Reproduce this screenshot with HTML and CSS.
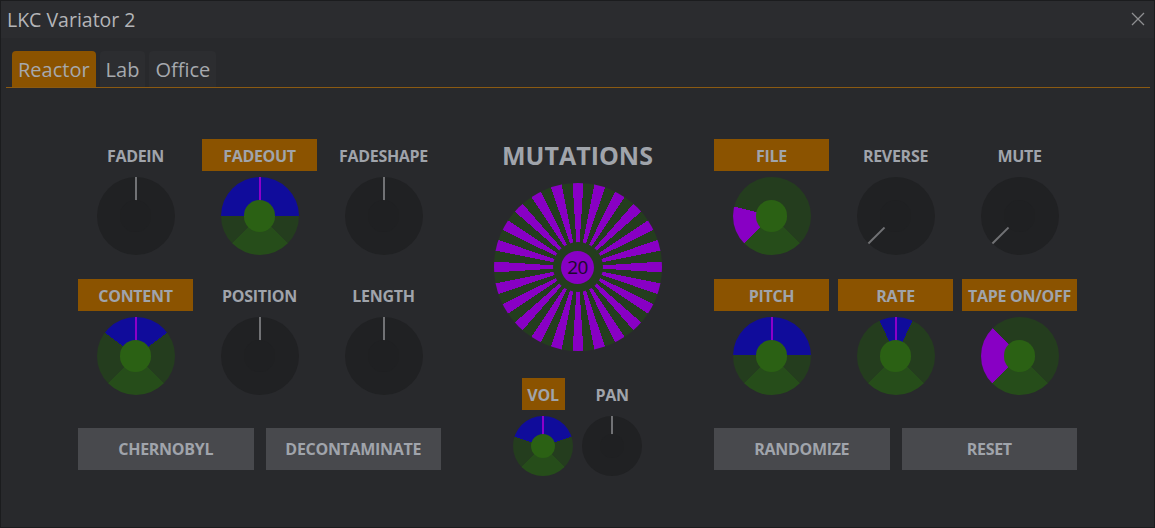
FILE: index.html
```html
<!DOCTYPE html>
<html>
<head>
<meta charset="utf-8">
<link rel="stylesheet" href="styles.css">
</head>
<body>
<div class="window">
  <div class="titlebar">
    <span class="title">LKC Variator 2</span>
    <svg class="close" width="14" height="14" viewBox="0 0 14 14"><path d="M1 1L13 13M13 1L1 13" stroke="#8e8f91" stroke-width="1.3" fill="none"/></svg>
  </div>
  <div class="tabbar">
    <div class="tab active">Reactor</div>
    <div class="tab">Lab</div>
    <div class="tab">Office</div>
  </div>
  <div class="main">
    <div class="group">
      <div class="cells">
        <div class="cell"><div class="label">FADEIN</div><div class="knob knob-lg knob-dark"><span class="ptr"></span></div></div>
        <div class="cell"><div class="label on">FADEOUT</div><div class="knob knob-lg knob-color" style="--start:270deg;--span:180deg;--fill:#100c9b"><span class="ptr"></span></div></div>
        <div class="cell"><div class="label">FADESHAPE</div><div class="knob knob-lg knob-dark"><span class="ptr"></span></div></div>
        <div class="cell"><div class="label on">CONTENT</div><div class="knob knob-lg knob-color" style="--start:307deg;--span:106deg;--fill:#100c9b"><span class="ptr"></span></div></div>
        <div class="cell"><div class="label">POSITION</div><div class="knob knob-lg knob-dark"><span class="ptr"></span></div></div>
        <div class="cell"><div class="label">LENGTH</div><div class="knob knob-lg knob-dark"><span class="ptr"></span></div></div>
      </div>
      <div class="buttons">
        <div class="btn">CHERNOBYL</div>
        <div class="btn">DECONTAMINATE</div>
      </div>
    </div>
    <div class="center">
      <div class="big-title">MUTATIONS</div>
      <div class="mut"><div class="mut-hub"><div class="mut-core">20</div></div></div>
      <div class="mini">
        <div class="mini-cell"><div class="label on vol">VOL</div><div class="knob knob-sm knob-color" style="--start:288deg;--span:144deg;--fill:#100c9b"><span class="ptr"></span></div></div>
        <div class="mini-cell"><div class="label">PAN</div><div class="knob knob-sm knob-dark"><span class="ptr"></span></div></div>
      </div>
    </div>
    <div class="group">
      <div class="cells">
        <div class="cell"><div class="label on">FILE</div><div class="knob knob-lg knob-color" style="--start:225deg;--span:59deg;--fill:#8800c4"></div></div>
        <div class="cell"><div class="label">REVERSE</div><div class="knob knob-lg knob-dark"><span class="ptr" style="--rot:-135deg"></span></div></div>
        <div class="cell"><div class="label">MUTE</div><div class="knob knob-lg knob-dark"><span class="ptr" style="--rot:-135deg"></span></div></div>
        <div class="cell"><div class="label on">PITCH</div><div class="knob knob-lg knob-color" style="--start:272deg;--span:176deg;--fill:#100c9b"><span class="ptr"></span></div></div>
        <div class="cell"><div class="label on">RATE</div><div class="knob knob-lg knob-color" style="--start:335deg;--span:50deg;--fill:#100c9b"><span class="ptr"></span></div></div>
        <div class="cell"><div class="label on">TAPE ON/OFF</div><div class="knob knob-lg knob-color" style="--start:225deg;--span:91deg;--fill:#8800c4"></div></div>
      </div>
      <div class="buttons">
        <div class="btn">RANDOMIZE</div>
        <div class="btn">RESET</div>
      </div>
    </div>
  </div>
</div>
</body>
</html>
```
FILE: styles.css
```css
html, body {
  margin: 0;
  padding: 0;
  background: #28292c;
}
.window {
  width: 1155px;
  height: 528px;
  box-sizing: border-box;
  border: 1px solid #1b1c1e;
  background: #28292c;
  font-family: "Open Sans", "Noto Sans", sans-serif;
  color: #a0a4ab;
  overflow: hidden;
}
.titlebar {
  height: 37px;
  background: #2b2c2f;
  display: flex;
  align-items: center;
  justify-content: space-between;
  padding: 0 9px 0 6px;
}
.title {
  font-size: 19.5px;
  color: #b4b5b8;
}
.close {
  display: block;
  margin-top: -2px;
}
.tabbar {
  margin: 13px 4px 0 5px;
  padding-left: 6px;
  display: flex;
  gap: 4px;
  border-bottom: 1px solid #8b5a12;
}
.tab {
  height: 36px;
  line-height: 37px;
  padding: 0 6px;
  font-size: 20px;
  color: #a6a9ae;
  background: #2c2d30;
  border-radius: 4px 4px 0 0;
}
.tab.active {
  background: #8b5300;
}
.main {
  display: grid;
  grid-template-columns: 363px 273px 363px;
  padding: 51px 0 0 77px;
}
.cells {
  display: grid;
  grid-template-columns: repeat(3, 115px);
  column-gap: 9px;
  row-gap: 24px;
}
.cell, .mini-cell {
  display: flex;
  flex-direction: column;
  align-items: center;
}
.label {
  height: 32px;
  width: 100%;
  box-sizing: border-box;
  padding-top: 2px;
  display: flex;
  align-items: center;
  justify-content: center;
  font-weight: 700;
  font-size: 16px;
  white-space: nowrap;
  letter-spacing: -0.3px;
}
.label.on {
  background: #8b5300;
}
.label.vol {
  width: 43px;
}
.knob {
  position: relative;
  border-radius: 50%;
  flex: none;
}
.knob-lg {
  width: 78px;
  height: 78px;
  margin-top: 6px;
}
.knob-sm {
  width: 60px;
  height: 60px;
  margin-top: 6px;
}
.knob-dark {
  background: #202123;
}
.knob-dark::after {
  content: "";
  position: absolute;
  left: 30%;
  top: 30%;
  width: 40%;
  height: 40%;
  border-radius: 50%;
  background: #1f2022;
}
.knob-color {
  background:
    conic-gradient(from var(--start), var(--fill) 0deg var(--span), transparent var(--span)),
    conic-gradient(#243d1e 0deg 135deg, #264d1a 135deg 225deg, #243d1e 225deg 360deg);
}
.knob-color::after {
  content: "";
  position: absolute;
  left: 30%;
  top: 30%;
  width: 40%;
  height: 40%;
  border-radius: 50%;
  background: #2b6114;
}
.ptr {
  position: absolute;
  inset: 0;
  transform: rotate(var(--rot, 0deg));
}
.ptr::before {
  content: "";
  position: absolute;
  left: calc(50% - 1px);
  top: 0;
  width: 2px;
  height: 31%;
  background: #717275;
}
.knob-color .ptr::before {
  background: #8c00c8;
}
.buttons {
  display: grid;
  grid-template-columns: 1fr 1fr;
  column-gap: 12px;
  margin-top: 33px;
}
.btn {
  height: 42px;
  background: #48494d;
  display: flex;
  align-items: center;
  justify-content: center;
  font-weight: 700;
  font-size: 16px;
  letter-spacing: -0.3px;
}
.center {
  display: flex;
  flex-direction: column;
  align-items: center;
}
.big-title {
  height: 32px;
  line-height: 32px;
  font-size: 25px;
  font-weight: 700;
  color: #a0a4ab;
}
.mut {
  margin-top: 12px;
  width: 168px;
  height: 168px;
  border-radius: 50%;
  background: repeating-conic-gradient(from -3.75deg, #8800c4 0deg 7.5deg, #243d1e 7.5deg 15deg);
  display: flex;
  align-items: center;
  justify-content: center;
}
.mut-hub {
  width: 50px;
  height: 50px;
  border-radius: 50%;
  background: #243d1e;
  display: flex;
  align-items: center;
  justify-content: center;
}
.mut-core {
  width: 33px;
  height: 33px;
  border-radius: 50%;
  background: #8800c4;
  display: flex;
  align-items: center;
  justify-content: center;
  font-size: 19px;
  color: #1c0a2c;
  letter-spacing: -0.5px;
}
.mini {
  margin-top: 27px;
  display: grid;
  grid-template-columns: 60px 60px;
  column-gap: 9px;
}
```
